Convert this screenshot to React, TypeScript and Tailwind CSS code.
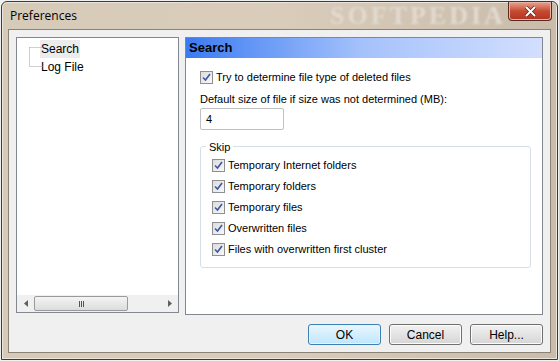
import React from "react";

const Check = () => (
  <div className="w-[13px] h-[13px] shrink-0 border border-[#8f8f8f] bg-gradient-to-br from-[#dcdcdc] to-[#f8f8f8] flex items-center justify-center">
    <svg width="9" height="9" viewBox="0 0 9 9">
      <path d="M1 4.5 L3.5 7 L8 1" fill="none" stroke="#3a56a8" strokeWidth="1.6" />
    </svg>
  </div>
);

const CheckRow = ({ label }: { label: string }) => (
  <div className="flex items-center gap-[3px] h-[21px]">
    <Check />
    <span>{label}</span>
  </div>
);

const Button = ({ label, primary }: { label: string; primary?: boolean }) => (
  <button
    className={
      "w-[73px] h-[21px] rounded-[3px] text-[12px] text-black flex items-center justify-center bg-gradient-to-b " +
      (primary
        ? "border border-[#3c7fb1] from-[#eaf6fd] to-[#bee6fd] shadow-[inset_0_0_0_1px_#e5f4fc]"
        : "border border-[#707070] from-[#f2f2f2] to-[#d5d5d5] shadow-[inset_0_0_0_1px_#fcfcfc]")
    }
  >
    {label}
  </button>
);

export default function App() {
  const skip = [
    "Temporary Internet folders",
    "Temporary folders",
    "Temporary files",
    "Overwritten files",
    "Files with overwritten first cluster",
  ];

  return (
    <div
      className="w-[559px] h-[361px] overflow-hidden bg-[#f0f0f0]"
      style={{ fontFamily: "'Liberation Sans', Arial, sans-serif" }}
    >
      <div className="w-[557px] h-[359px] m-[1px] rounded-t-[6px] border border-[#3f3a34] bg-gradient-to-r from-[#d6cab9] via-[#d9ccbb] to-[#c9bcab] flex flex-col shadow-[inset_0_0_0_1px_#ece5dc]">
        {/* Title bar */}
        <div className="h-[27px] flex items-start justify-between relative">
          <span
            className="pl-[8px] pt-[5px] text-[12px] text-black"
            style={{ fontFamily: "'Open Sans', 'Liberation Sans', sans-serif" }}
          >
            Preferences
          </span>
          <span
            className="absolute left-[328px] top-[1px] leading-[26px] text-[26px] tracking-[3px] font-bold text-[#e2dacf] blur-[1px]"
            style={{ fontFamily: "'Liberation Serif', serif" }}
          >
            SOFTPEDIA
          </span>
          <div className="relative mr-[5px] w-[44px] h-[19px] rounded-b-[4px] border border-[#5a2a20] border-t-0 bg-gradient-to-b from-[#e8a38f] via-[#c74a32] to-[#b03420] flex items-center justify-center shadow-[inset_0_0_0_1px_#e9b4a6]">
            <svg width="13" height="11" viewBox="0 0 13 11">
              <path d="M2 1 L11 10 M11 1 L2 10" stroke="#4a2a22" strokeWidth="3.4" />
              <path d="M2 1 L11 10 M11 1 L2 10" stroke="#ffffff" strokeWidth="2" />
            </svg>
          </div>
        </div>

        {/* Client area */}
        <div className="mx-[6px] mb-[6px] flex-1 border border-[#8c8175] bg-[#f0f0f0] flex flex-col px-[7px] pt-[7px]">
          <div className="flex gap-[6px] h-[278px]">
            {/* Tree */}
            <div className="w-[163px] h-[276px] border border-[#828790] bg-white flex flex-col">
              <div className="flex-1 pt-[2px] text-[12px] text-black relative">
                <svg className="absolute left-[12px] top-[9px]" width="14" height="20" viewBox="0 0 14 20">
                  <path d="M0.5 0.5 H14 M0.5 0.5 V19.5 H14" fill="none" stroke="#a0a0a0" strokeDasharray="1 1" />
                </svg>
                <div className="pl-[23px] flex flex-col">
                  <span className="h-[18px] w-fit px-[1px] bg-[#ececec] leading-[18px]">Search</span>
                  <span className="h-[18px] px-[1px] leading-[18px]">Log File</span>
                </div>
              </div>
              {/* Scrollbar */}
              <div className="h-[17px] bg-[#f0f0f0] flex items-center">
                <div className="w-[17px] flex justify-center">
                  <svg width="4" height="7" viewBox="0 0 4 7"><path d="M4 0 L0 3.5 L4 7Z" fill="#606060" /></svg>
                </div>
                <div className="w-[94px] h-[15px] rounded-[2px] border border-[#9a9a9a] bg-gradient-to-b from-[#f4f4f4] to-[#dcdcdc] flex items-center justify-center gap-[1px]">
                  <div className="w-[1px] h-[6px] bg-[#555]" />
                  <div className="w-[1px] h-[6px] bg-[#555]" />
                  <div className="w-[1px] h-[6px] bg-[#555]" />
                </div>
                <div className="flex-1" />
                <div className="w-[17px] flex justify-center">
                  <svg width="4" height="7" viewBox="0 0 4 7"><path d="M0 0 L4 3.5 L0 7Z" fill="#606060" /></svg>
                </div>
              </div>
            </div>

            {/* Settings panel */}
            <div className="flex-1 h-[278px] border border-[#828790] bg-white flex flex-col text-[11px] text-black">
              <div className="h-[20px] bg-gradient-to-r from-[#3a7af0] via-[#a6c2fb] to-[#d3dfff] pl-[3px] flex items-center">
                <span className="text-[13px] font-bold">Search</span>
              </div>
              <div className="pl-[14px] pr-[11px] pt-[12px] flex flex-col">
                <div className="flex items-center gap-[3px] h-[14px]">
                  <Check />
                  <span>Try to determine file type of deleted files</span>
                </div>
                <span className="mt-[9px] leading-[13px]">Default size of file if size was not determined (MB):</span>
                <div className="mt-[2px] w-[84px] h-[22px] border border-[#c0c0c0] rounded-[2px] pl-[5px] flex items-center">
                  4
                </div>
                <div className="mt-[16px] h-[122px] border border-[#d5dfe5] rounded-[3px] relative px-[11px] pt-[8px]">
                  <span className="absolute -top-[8px] left-[5px] bg-white px-[3px]">Skip</span>
                  {skip.map((s) => (
                    <CheckRow key={s} label={s} />
                  ))}
                </div>
              </div>
            </div>
          </div>

          {/* Buttons */}
          <div className="flex justify-end gap-[8px] mt-[9px]">
            <Button label="OK" primary />
            <Button label="Cancel" />
            <Button label="Help..." />
          </div>
        </div>
      </div>
    </div>
  );
}
